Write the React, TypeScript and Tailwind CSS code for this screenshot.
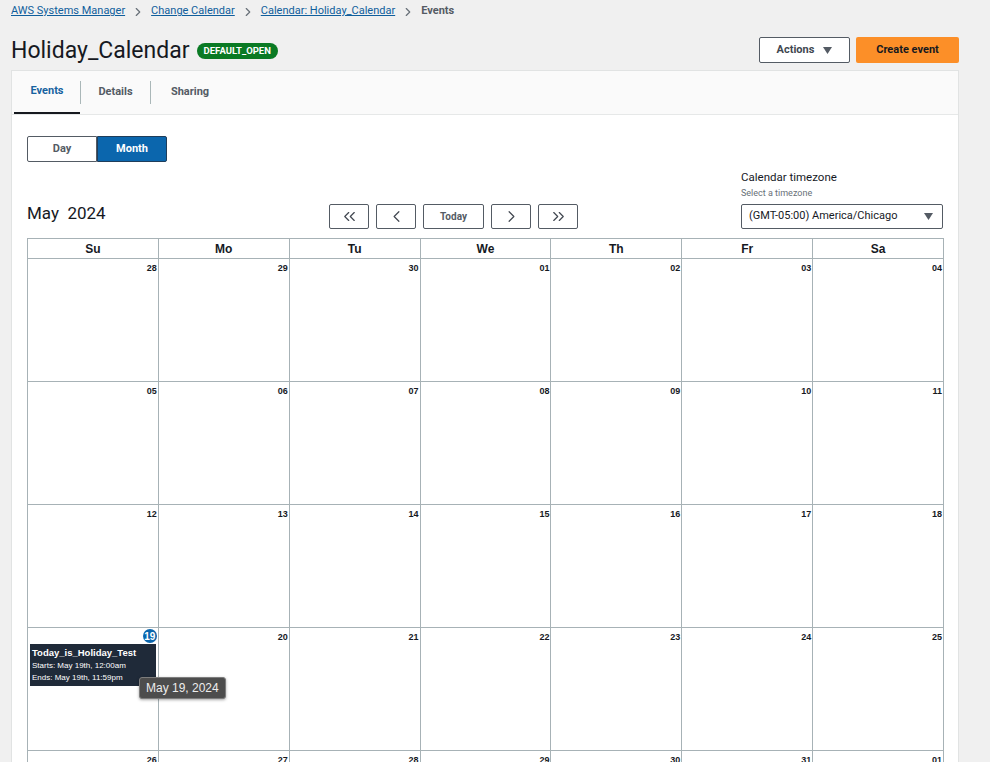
import React from "react";
import { ChevronRight, ChevronLeft, ChevronsLeft, ChevronsRight } from "lucide-react";

const ui = { fontFamily: "Roboto, 'Liberation Sans', sans-serif" };
const ar = { fontFamily: "'Liberation Sans', Arial, sans-serif" };

const weeks = [
  ["28", "29", "30", "01", "02", "03", "04"],
  ["05", "06", "07", "08", "09", "10", "11"],
  ["12", "13", "14", "15", "16", "17", "18"],
  ["19", "20", "21", "22", "23", "24", "25"],
  ["26", "27", "28", "29", "30", "31", "01"],
];
const heads = ["Su", "Mo", "Tu", "We", "Th", "Fr", "Sa"];

function Caret() {
  return (
    <svg width="9" height="7" viewBox="0 0 9 7">
      <path d="M0 0 H9 L4.5 7 Z" fill="currentColor" />
    </svg>
  );
}

export default function App() {
  return (
    <div className="min-h-[762px] w-[990px] bg-[#f0f0f0] overflow-hidden" style={ui}>
      {/* breadcrumb */}
      <div className="flex items-center h-[23px] pl-[11px] text-[11px] text-[#0f5e9c]">
        <span className="underline">AWS Systems Manager</span>
        <ChevronRight size={14} strokeWidth={2} className="mx-[6px] text-[#687078]" />
        <span className="underline">Change Calendar</span>
        <ChevronRight size={14} strokeWidth={2} className="mx-[6px] text-[#687078]" />
        <span className="underline">Calendar: Holiday_Calendar</span>
        <ChevronRight size={14} strokeWidth={2} className="mx-[6px] text-[#687078]" />
        <span className="text-[#545b64] font-bold">Events</span>
      </div>
      {/* title row */}
      <div className="flex items-center h-[26px] mt-[14px] pl-[11px] pr-[31px]">
        <span className="text-[23px] text-[#16191f] leading-none">Holiday_Calendar</span>
        <span className="ml-[7px] mt-[2px] bg-[#0a7a24] text-white text-[9.5px] font-bold rounded-full h-[16px] px-[7px] flex items-center">
          DEFAULT_OPEN
        </span>
        <div className="flex-1" />
        <button className="h-[26px] w-[91px] border border-[#545b64] bg-white rounded-[2px] text-[11px] font-bold text-[#414750] flex items-center justify-center gap-[9px]">
          Actions <span className="text-[#545b64]"><Caret /></span>
        </button>
        <button className="ml-[6px] h-[26px] w-[103px] bg-[#fc8f28] rounded-[2px] text-[11px] font-bold text-[#16191f]">
          Create event
        </button>
      </div>
      {/* card */}
      <div className="ml-[11px] mt-[7px] w-[948px] bg-white border border-[#e1e3e3]">
        <div className="h-[44px] bg-[#fafafa] border-b border-[#e6e8e8] flex items-stretch pl-[2px]">
          <div className="w-[66px] flex items-center justify-center text-[11px] font-bold text-[#16629f] border-b-2 border-[#16191f]">
            Events
          </div>
          <div className="w-px bg-[#aab7b8] my-[10px]" />
          <div className="w-[69px] flex items-center justify-center text-[11px] font-bold text-[#545b64]">Details</div>
          <div className="w-px bg-[#aab7b8] my-[10px]" />
          <div className="w-[78px] flex items-center justify-center text-[11px] font-bold text-[#545b64]">Sharing</div>
        </div>
        <div className="px-[15px] pt-[21px]">
          <div className="flex">
            <button className="w-[70px] h-[26px] border border-[#545b64] bg-white text-[11px] font-bold text-[#545b64] rounded-l-[2px]">Day</button>
            <button className="w-[70px] h-[26px] border border-[#1f3d5a] bg-[#0b66ad] text-[11px] font-bold text-white rounded-r-[2px]">Month</button>
          </div>
          <div className="flex items-end mt-[8px]">
            <div className="w-[302px] text-[17px] text-[#16191f] leading-none pb-[7px]">May&nbsp; 2024</div>
            <div className="flex gap-[7px] pb-0">
              <button className="w-[40px] h-[25px] border border-[#545b64] rounded-[2px] bg-white flex items-center justify-center text-[#414750]">
                <ChevronsLeft size={19} strokeWidth={1.5} />
              </button>
              <button className="w-[40px] h-[25px] border border-[#545b64] rounded-[2px] bg-white flex items-center justify-center text-[#414750]">
                <ChevronLeft size={19} strokeWidth={1.5} />
              </button>
              <button className="w-[61px] h-[25px] border border-[#545b64] rounded-[2px] bg-white text-[10px] font-bold text-[#545b64]">
                Today
              </button>
              <button className="w-[40px] h-[25px] border border-[#545b64] rounded-[2px] bg-white flex items-center justify-center text-[#414750]">
                <ChevronRight size={19} strokeWidth={1.5} />
              </button>
              <button className="w-[40px] h-[25px] border border-[#545b64] rounded-[2px] bg-white flex items-center justify-center text-[#414750]">
                <ChevronsRight size={19} strokeWidth={1.5} />
              </button>
            </div>
            <div className="flex-1" />
            <div className="w-[202px]">
              <div className="text-[11.5px] text-[#16191f] leading-[14px]">Calendar timezone</div>
              <div className="text-[9px] text-[#687078] leading-[12px] mt-[3px]">Select a timezone</div>
              <div className="mt-[5px] h-[25px] border border-[#545b64] rounded-[2px] flex items-center justify-between pl-[7px] pr-[9px] text-[11px] text-[#16191f]">
                <span>(GMT-05:00) America/Chicago</span>
                <span className="text-[#545b64]"><Caret /></span>
              </div>
            </div>
          </div>
          {/* calendar grid */}
          <div className="mt-[9px] w-[917px] border-l border-t border-[#a7b2b6]" style={ar}>
            <div className="grid grid-cols-7">
              {heads.map((h) => (
                <div key={h} className="h-[20px] border-r border-b border-[#a7b2b6] flex items-center justify-center text-[12px] font-bold text-[#16191f]">
                  {h}
                </div>
              ))}
            </div>
            {weeks.map((w, wi) => (
              <div key={wi} className="grid grid-cols-7">
                {w.map((d, di) => {
                  const special = wi === 3 && di === 0;
                  return (
                    <div key={di} className="relative h-[123px] border-r border-b border-[#a7b2b6]">
                      {special ? (
                        <div className="flex justify-end pr-[1px] pt-[1px]">
                          <span className="w-[14px] h-[14px] rounded-full bg-[#0b66ad] text-white text-[10px] font-bold flex items-center justify-center">
                            {d}
                          </span>
                        </div>
                      ) : (
                        <div className="text-right pr-[1px] pt-[4px] text-[9px] font-bold text-[#16191f] leading-[11px]">{d}</div>
                      )}
                      {special && (
                        <>
                          <div className="ml-[2px] mt-[1px] w-[126px] h-[42px] bg-[#1f2a39] text-white px-[2px] pt-[3px]">
                            <div className="text-[9.5px] font-bold leading-[12px]">Today_is_Holiday_Test</div>
                            <div className="text-[8px] leading-[12px] mt-[1px]">Starts: May 19th, 12:00am</div>
                            <div className="text-[8px] leading-[11px]">Ends: May 19th, 11:59pm</div>
                          </div>
                          <div
                            className="absolute left-[111px] top-[49px] z-10 h-[22px] px-[6px] flex items-center bg-[#4d4d4d] border border-[#7d7d7d] rounded-[3px] text-[12px] text-[#ececec] whitespace-nowrap shadow-[0_1px_3px_rgba(0,0,0,0.35)]"
                            style={ar}
                          >
                            May 19, 2024
                          </div>
                        </>
                      )}
                    </div>
                  );
                })}
              </div>
            ))}
          </div>
        </div>
      </div>
    </div>
  );
}
